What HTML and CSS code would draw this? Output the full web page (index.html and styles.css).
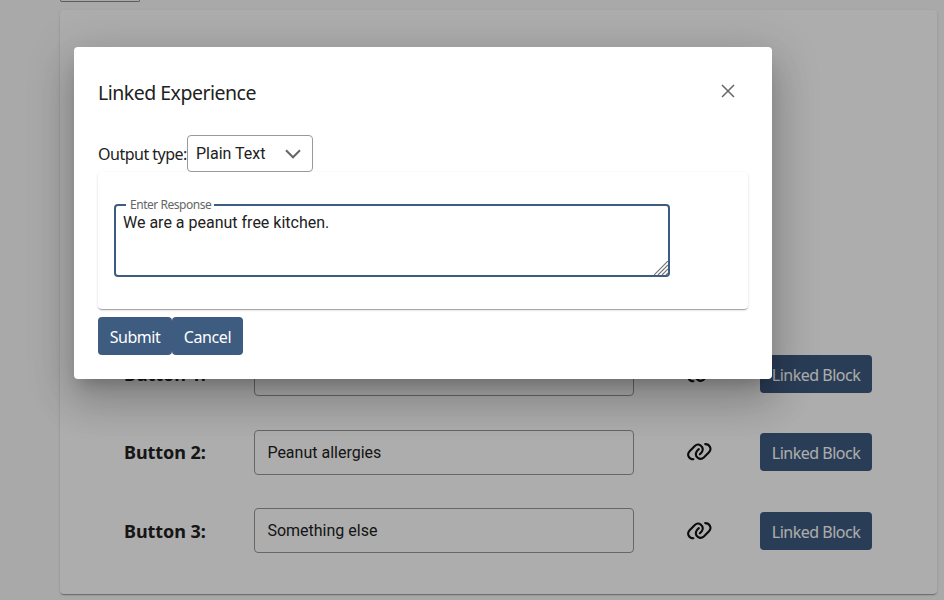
FILE: index.html
```html
<!DOCTYPE html>
<html lang="en">
<head>
<meta charset="utf-8">
<title>Linked Experience</title>
<link rel="stylesheet" href="styles.css">
</head>
<body>
<svg class="defs" width="0" height="0" aria-hidden="true">
  <symbol id="link" viewBox="0 0 25 18">
    <path d="M6.4 16.3C1.8 16.3-.5 11.4 2.6 8.2L7.8 3C11.6-.6 17.4 3.6 15.2 8.4C14.7 9.6 13.9 10.4 12.8 11.3"/>
    <path d="M18.2 1.1C22.8 1.1 25.1 6 22 9.2L16.8 14.4C13 18 7.2 13.8 9.4 9C9.9 7.8 10.7 7 11.8 6.1"/>
  </symbol>
</svg>
<main class="page">
  <div class="stub"></div>
  <section class="card">
    <div class="row">
      <span class="row-label">Button 1:</span>
      <div class="field"></div>
      <svg class="link-icon"><use href="#link"/></svg>
      <button class="btn btn-block">Linked Block</button>
    </div>
    <div class="row">
      <span class="row-label">Button 2:</span>
      <div class="field">Peanut allergies</div>
      <svg class="link-icon"><use href="#link"/></svg>
      <button class="btn btn-block">Linked Block</button>
    </div>
    <div class="row">
      <span class="row-label">Button 3:</span>
      <div class="field">Something else</div>
      <svg class="link-icon"><use href="#link"/></svg>
      <button class="btn btn-block">Linked Block</button>
    </div>
  </section>
</main>
<div class="scrim"></div>
<div class="dialog" role="dialog">
  <header class="dialog-head">
    <h2 class="title">Linked Experience</h2>
    <svg class="close" viewBox="0 0 14 14"><path d="M1 1l12 12M13 1L1 13"/></svg>
  </header>
  <div class="output">
    <span class="output-label">Output type:</span>
    <div class="select"><span>Plain Text</span><svg class="chevron" viewBox="0 0 16 10"><path d="M1 1.3l7 7 7-7"/></svg></div>
  </div>
  <div class="panel">
    <div class="textarea">
      <span class="legend">Enter Response</span>
      <p class="response">We are a peanut free kitchen.</p>
      <svg class="grip" viewBox="0 0 14 14"><path d="M0 14L14 0M4 14L14 4M8 14l6-6M12 14l2-2"/></svg>
    </div>
  </div>
  <footer class="actions">
    <button class="btn btn-submit">Submit</button>
    <button class="btn btn-cancel">Cancel</button>
  </footer>
</div>
</body>
</html>
```
FILE: styles.css
```css
* { box-sizing: border-box; }
body {
  margin: 0;
  height: 600px;
  overflow: hidden;
  background: #f9f9f9;
  color: #212121;
  font: 16px/24px "Noto Sans", sans-serif;
}
.defs { display: block; }
.page { padding: 0 7px 0 60px; }
.stub {
  width: 80px;
  height: 2px;
  border: 1px solid #888;
  border-top: 0;
  border-radius: 0 0 4px 4px;
}
.card {
  height: 584px;
  margin-top: 8px;
  padding: 341.3px 65px 0 64px;
  border-radius: 4px;
  background: #fff;
  box-shadow: 0 2px 1px -1px rgba(0,0,0,.2), 0 1px 1px rgba(0,0,0,.14), 0 1px 3px rgba(0,0,0,.12);
}
.row {
  display: flex;
  align-items: center;
  height: 45px;
  margin-bottom: 33.4px;
}
.row-label { width: 130px; font-size: 18px; font-weight: 700; letter-spacing: -.05px; }
.field {
  width: 380px;
  height: 45px;
  padding: 0 12.4px;
  border: 1px solid #999;
  border-radius: 4px;
  font: 16px/43px Roboto, sans-serif;
}
.link-icon {
  width: 25px;
  height: 18px;
  margin: 0 auto 0 53px;
  fill: none;
  stroke: #111;
  stroke-width: 2.1;
  stroke-linecap: round;
}
.btn {
  height: 38px;
  padding: 2px 0 0;
  border: 0;
  border-radius: 4px;
  background: #3e5b80;
  color: #fff;
  font: 16px/24px "Noto Sans", sans-serif;
  white-space: nowrap;
}
.btn-block { width: 112px; letter-spacing: -.5px; }
.scrim { position: absolute; inset: 0; background: rgba(0,0,0,.32); }
.dialog {
  position: absolute;
  left: 74px;
  top: 47px;
  width: 698px;
  height: 332px;
  padding: 24px;
  border-radius: 4px;
  background: #fff;
  box-shadow: 0 11px 15px -7px rgba(0,0,0,.2), 0 24px 38px 3px rgba(0,0,0,.14), 0 9px 46px 8px rgba(0,0,0,.12);
}
.dialog-head { display: flex; justify-content: space-between; height: 64px; padding-right: 13px; }
.title { height: 32px; margin: 6px 0 0; font-size: 19.5px; line-height: 32px; font-weight: 400; letter-spacing: -.5px; }
.close { width: 14px; height: 14px; margin-top: 13px; fill: none; stroke: #666; stroke-width: 1.5; }
.output { display: flex; align-items: center; height: 37px; }
.output-label { width: 89px; letter-spacing: -.5px; white-space: nowrap; }
.select {
  display: flex;
  align-items: center;
  justify-content: space-between;
  width: 126px;
  height: 37px;
  padding: 0 11px 0 8px;
  border: 1px solid #999;
  border-radius: 4px;
  font-family: Roboto, sans-serif;
}
.chevron { width: 16px; height: 10px; fill: none; stroke: #666; stroke-width: 2; }
.panel {
  height: 137px;
  padding: 32px 16px;
  border-radius: 4px;
  box-shadow: 0 2px 1px -1px rgba(0,0,0,.2), 0 1px 1px rgba(0,0,0,.14), 0 1px 3px rgba(0,0,0,.12);
}
.textarea {
  position: relative;
  width: 556px;
  height: 73px;
  padding: 5px 7px;
  border: 2px solid #3e5b80;
  border-radius: 4px;
}
.legend {
  position: absolute;
  left: 10px;
  top: -9px;
  width: 88px;
  padding: 0 4px;
  background: #fff;
  color: #666;
  font-size: 12px;
  line-height: 16px;
  white-space: nowrap;
  letter-spacing: -.47px;
}
.response { margin: 0; font: 16px/24px Roboto, sans-serif; }
.grip { position: absolute; right: 0; bottom: 0; width: 14px; height: 14px; fill: none; stroke: #777; stroke-width: 1.2; }
.actions { display: flex; padding-top: 8px; }
.btn-submit { width: 74px; letter-spacing: -.5px; }
.btn-cancel { width: 71px; letter-spacing: -.4px; }
```
